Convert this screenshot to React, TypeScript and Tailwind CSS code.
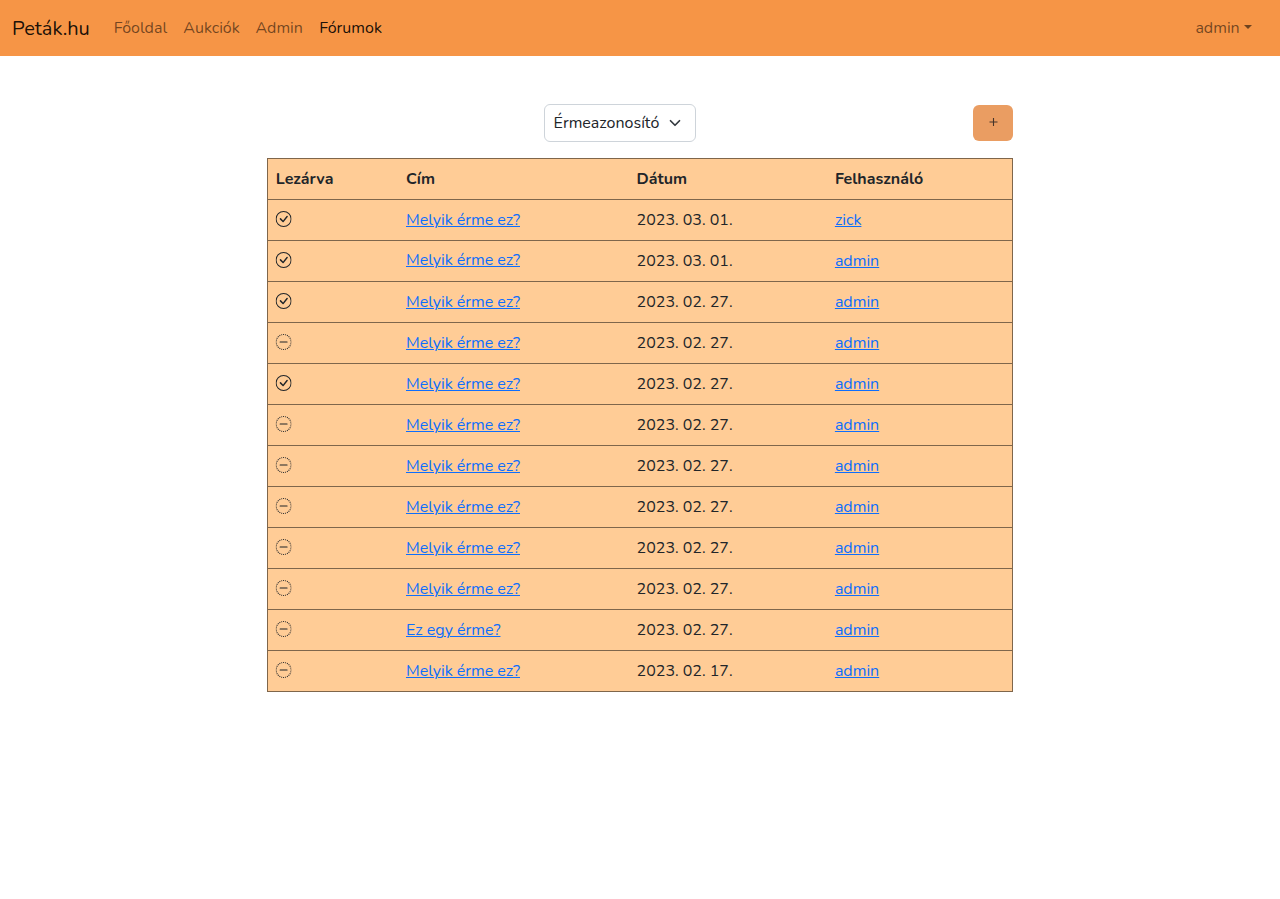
import { BsCheckCircle, BsDashCircleDotted } from "react-icons/bs";

type Topic = { closed: boolean; title: string; date: string; user: string; raised?: boolean };

const TITLE = "Melyik érme ez?";

const topics: Topic[] = [
  { closed: true, title: TITLE, date: "2023. 03. 01.", user: "zick" },
  { closed: true, title: TITLE, date: "2023. 03. 01.", user: "admin", raised: true },
  { closed: true, title: TITLE, date: "2023. 02. 27.", user: "admin" },
  { closed: false, title: TITLE, date: "2023. 02. 27.", user: "admin" },
  { closed: true, title: TITLE, date: "2023. 02. 27.", user: "admin" },
  { closed: false, title: TITLE, date: "2023. 02. 27.", user: "admin" },
  { closed: false, title: TITLE, date: "2023. 02. 27.", user: "admin" },
  { closed: false, title: TITLE, date: "2023. 02. 27.", user: "admin" },
  { closed: false, title: TITLE, date: "2023. 02. 27.", user: "admin" },
  { closed: false, title: TITLE, date: "2023. 02. 27.", user: "admin" },
  { closed: false, title: "Ez egy érme?", date: "2023. 02. 27.", user: "admin" },
  { closed: false, title: TITLE, date: "2023. 02. 17.", user: "admin" },
];

const ROW = "grid h-[41px] grid-cols-[130.2px_230.6px_198.3px_1fr] items-center border-b border-[#7f664b] *:pl-[7.8px]";
const LINK = "text-[#0d6efd] underline decoration-1 underline-offset-1";
const ICON = "size-4 -translate-x-[0.4px]";

function Navbar() {
  return (
    <nav className="flex h-14 items-center bg-[#f69546] pl-3 pr-7 text-[#0000008c]">
      <a className="w-[101.7px] pt-0.5 text-xl text-[#000000e6]">Peták.hu</a>
      <a className="w-[69.6px]">Főoldal</a>
      <a className="w-[72.2px]">Aukciók</a>
      <a className="w-[63.8px]">Admin</a>
      <a className="text-[#000000e6]">Fórumok</a>
      <a className="ml-auto flex items-center gap-[4.3px]">
        admin
        <svg className="mb-0.5" width="8" height="4" viewBox="0 0 8 4" fill="currentColor"><path d="M0 0h8L4 4z" /></svg>
      </a>
    </nav>
  );
}

export default function App() {
  return (
    <div className="min-h-screen bg-white font-[Nunito,Lato,sans-serif] text-base text-[#212529]">
      <Navbar />
      <main className="mx-auto w-[746px] pt-12">
        <div className="flex h-[38px] items-center">
          <button className="ml-[277px] flex h-[38px] w-[152px] items-center justify-between rounded-md border border-[#ced4da] bg-white pl-[8.6px] pr-[14px]">
            Érmeazonosító
            <svg width="12" height="12" viewBox="0 0 16 16" fill="none" stroke="#343a40" strokeWidth="2.3" strokeLinecap="round" strokeLinejoin="round"><path d="m2 5 6 6 6-6" /></svg>
          </button>
          <button className="ml-auto flex h-9 w-10 items-center justify-center rounded-md bg-[#ea9d62]" aria-label="Új téma">
            <svg className="mb-0.5" width="9" height="8" viewBox="0 0 9 8" fill="none" stroke="#45352a" strokeWidth="1.1"><path d="M4.5 0v8M.5 4h8" /></svg>
          </button>
        </div>
        <section className="mt-4 border-x border-t border-[#7f664b] bg-[#ffcc96]">
          <div className={`${ROW} font-bold`}>
            <span>Lezárva</span>
            <span>Cím</span>
            <span>Dátum</span>
            <span>Felhasználó</span>
          </div>
          {topics.map((t, i) => (
            <div key={i} className={ROW}>
              <span className="pb-0.5">{t.closed ? <BsCheckCircle className={ICON} /> : <BsDashCircleDotted className={ICON} />}</span>
              <span className={t.raised ? "pb-0.5" : ""}><a className={LINK}>{t.title}</a></span>
              <span>{t.date}</span>
              <span><a className={LINK}>{t.user}</a></span>
            </div>
          ))}
        </section>
      </main>
    </div>
  );
}
